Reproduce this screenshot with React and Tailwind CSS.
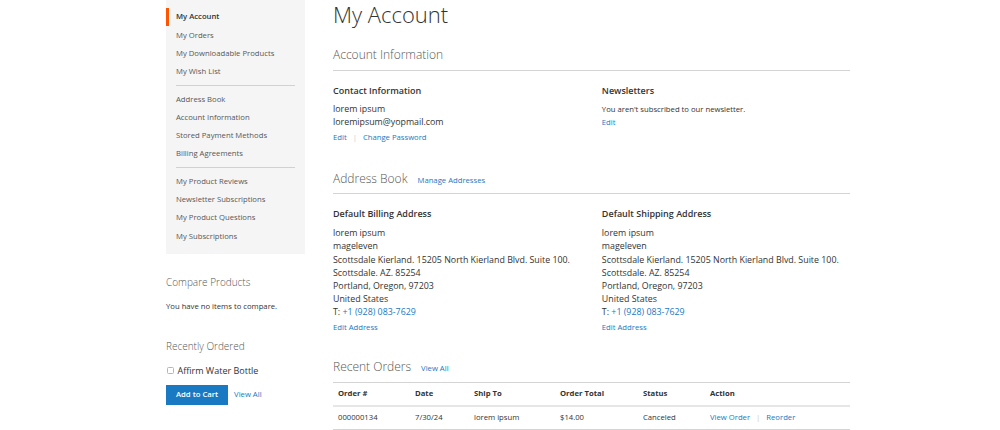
import React from "react";

const navGroups = [
  ["My Account", "My Orders", "My Downloadable Products", "My Wish List"],
  ["Address Book", "Account Information", "Stored Payment Methods", "Billing Agreements"],
  ["My Product Reviews", "Newsletter Subscriptions", "My Product Questions", "My Subscriptions"],
];

function Nav() {
  return (
    <nav className="bg-[#f5f5f5] pt-[8px] pb-[8px]">
      {navGroups.map((g, gi) => (
        <div key={gi}>
          {gi > 0 && <div className="mx-[10px] mt-[4px] mb-[4px] border-t border-[#d1d1d1]" />}
          {g.map((item) =>
            item === "My Account" ? (
              <div key={item} className="h-[18.3px] flex items-center border-l-[3px] border-[#ff5501] pl-[7px] text-[7.7px] font-semibold text-[#333]">
                {item}
              </div>
            ) : (
              <div key={item} className="h-[18.3px] flex items-center pl-[10px] text-[7.7px] text-[#575757]">
                {item}
              </div>
            )
          )}
        </div>
      ))}
    </nav>
  );
}

function Sidebar() {
  return (
    <aside className="w-[139px] shrink-0">
      <Nav />
      <div className="mt-[20.5px] text-[10px] leading-[16px] font-light text-[#575757]">Compare Products</div>
      <div className="mt-[10.5px] text-[7.7px] leading-[11px] text-[#333]">You have no items to compare.</div>
      <div className="mt-[26.5px] text-[10px] leading-[16px] font-light text-[#575757]">Recently Ordered</div>
      <div className="mt-[9.5px] flex items-center h-[13px] pl-[1px]">
        <span className="w-[7px] h-[7px] border border-[#b6b6b6] rounded-[1.5px] bg-white" />
        <span className="ml-[3.5px] text-[9px] leading-[13px] text-[#333]">Affirm Water Bottle</span>
      </div>
      <div className="mt-[8px] flex items-center">
        <div className="h-[20px] px-[9px] flex items-center bg-[#1979c3] border border-[#1979c3] text-white text-[7.7px] font-semibold">
          Add to Cart
        </div>
        <a className="ml-[6px] text-[7.7px] text-[#1979c3]">View All</a>
      </div>
    </aside>
  );
}

function SectionTitle({ title, link, mt }) {
  return (
    <div className={`${mt} flex items-baseline border-b border-[#d4d4d4] pb-[4.5px]`}>
      <span className="text-[12px] leading-[20px] font-light text-[#575757]">{title}</span>
      {link && <a className="ml-[10px] text-[7.7px] text-[#1979c3]">{link}</a>}
    </div>
  );
}

function BoxTitle({ children, mb }) {
  return <div className={`text-[9px] leading-[13px] font-semibold text-[#333] ${mb}`}>{children}</div>;
}

function Address({ title }) {
  return (
    <div className="w-[48%]">
      <BoxTitle mb="mb-[7.5px]">{title}</BoxTitle>
      <div className="text-[8.85px] leading-[13.2px] text-[#333]">
        <div>lorem ipsum</div>
        <div>mageleven</div>
        <div>Scottsdale Kierland. 15205 North Kierland Blvd. Suite 100.</div>
        <div>Scottsdale. AZ. 85254</div>
        <div>Portland, Oregon, 97203</div>
        <div>United States</div>
        <div>
          T: <a className="text-[#1979c3]">+1 (928) 083-7629</a>
        </div>
      </div>
      <div className="mt-[2px] text-[7.7px] leading-[11px] text-[#1979c3]">Edit Address</div>
    </div>
  );
}

const cols = [
  { label: "Order #", w: "w-[77px]", v: "000000134" },
  { label: "Date", w: "w-[59px]", v: "7/30/24" },
  { label: "Ship To", w: "w-[86px]", v: "lorem ipsum" },
  { label: "Order Total", w: "w-[83px]", v: "$14.00" },
  { label: "Status", w: "w-[67px]", v: "Canceled" },
];

function Orders() {
  return (
    <div className="border-b border-[#d4d4d4]">
      <div className="flex border-b-2 border-[#e6e6e6] py-[5.5px] text-[7.7px] leading-[11px] font-bold text-[#333]">
        {cols.map((c) => (
          <div key={c.label} className={`${c.w} pl-[5px]`}>{c.label}</div>
        ))}
        <div className="flex-1 pl-[5px]">Action</div>
      </div>
      <div className="flex py-[5.5px] text-[7.7px] leading-[11px] text-[#333]">
        {cols.map((c) => (
          <div key={c.label} className={`${c.w} pl-[5px]`}>{c.v}</div>
        ))}
        <div className="flex-1 pl-[5px] flex items-center text-[#1979c3]">
          <span>View Order</span>
          <span className="mx-[6px] text-[#c9c9c9]">|</span>
          <span>Reorder</span>
        </div>
      </div>
    </div>
  );
}

function Main() {
  return (
    <main className="w-[517px] shrink-0 ml-[28px]">
      <h1 className="text-[22px] leading-[28px] font-light text-[#333]">My Account</h1>

      <SectionTitle title="Account Information" mt="mt-[17px]" />
      <div className="mt-[13.5px] flex justify-between">
        <div className="w-[48%]">
          <BoxTitle mb="mb-[5.5px]">Contact Information</BoxTitle>
          <div className="text-[8.85px] leading-[13.33px] text-[#333]">
            <div>lorem ipsum</div>
            <div>loremipsum@yopmail.com</div>
          </div>
          <div className="mt-[3px] text-[7.7px] leading-[11px] text-[#1979c3] flex">
            <span>Edit</span>
            <span className="mx-[6px] text-[#c9c9c9]">|</span>
            <span>Change Password</span>
          </div>
        </div>
        <div className="w-[48%]">
          <BoxTitle mb="mb-[5.5px]">Newsletters</BoxTitle>
          <div className="text-[7.7px] leading-[13.33px] text-[#333]">You aren't subscribed to our newsletter.</div>
          <div className="mt-[1.5px] text-[7.7px] leading-[11px] text-[#1979c3]">Edit</div>
        </div>
      </div>

      <SectionTitle title="Address Book" link="Manage Addresses" mt="mt-[25.5px]" />
      <div className="mt-[12.5px] flex justify-between">
        <Address title="Default Billing Address" />
        <Address title="Default Shipping Address" />
      </div>

      <SectionTitle title="Recent Orders" link="View All" mt="mt-[24.5px]" />
      <Orders />
    </main>
  );
}

export default function App() {
  return (
    <div className="w-[1000px] h-[430px] overflow-hidden bg-white font-['Open_Sans',sans-serif] flex pl-[166px]">
      <Sidebar />
      <Main />
    </div>
  );
}
